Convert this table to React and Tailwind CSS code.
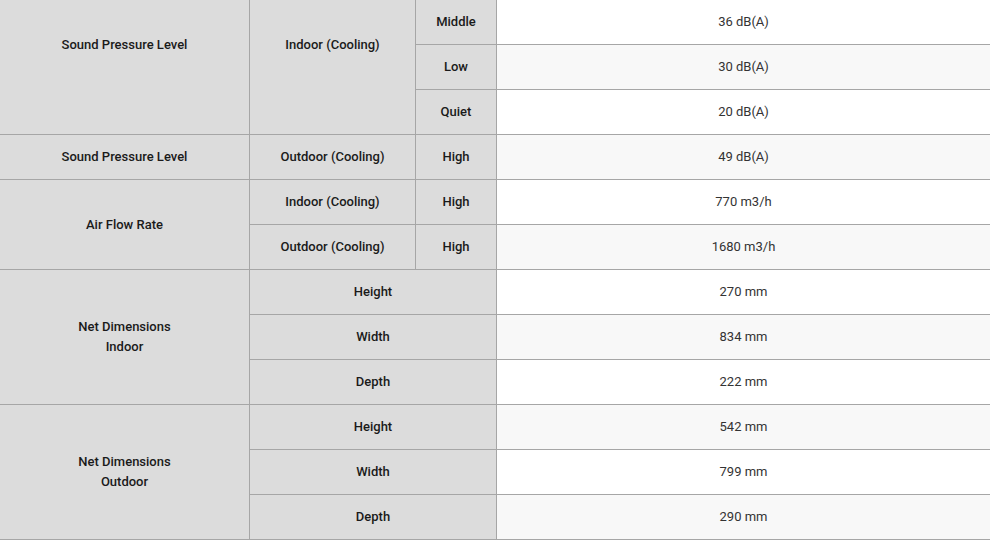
import React from "react";

const H = "bg-[#dcdcdc] text-[#1a1a1a] font-medium flex items-center justify-center text-center";

function V({ children, odd }) {
  return (
    <div className={`${odd ? "bg-[#f8f8f8]" : "bg-white"} text-[#333] flex items-center justify-center`}>
      {children}
    </div>
  );
}

export default function App() {
  return (
    <div
      className="w-[990px] h-[540px] overflow-hidden bg-white text-[13px]"
      style={{ fontFamily: "Roboto, 'Liberation Sans', sans-serif" }}
    >
      <div className="grid grid-cols-[249px_165px_80px_493px] grid-rows-[repeat(12,44px)] gap-px bg-[#a6a6a6] border-b border-[#a6a6a6] w-[990px]">
        <div className={`${H} row-span-3 pb-[45px]`}>Sound Pressure Level</div>
        <div className={`${H} row-span-3 pb-[45px]`}>Indoor (Cooling)</div>
        <div className={H}>Middle</div>
        <V>36 dB(A)</V>
        <div className={H}>Low</div>
        <V odd>30 dB(A)</V>
        <div className={H}>Quiet</div>
        <V>20 dB(A)</V>

        <div className={H}>Sound Pressure Level</div>
        <div className={H}>Outdoor (Cooling)</div>
        <div className={H}>High</div>
        <V odd>49 dB(A)</V>

        <div className={`${H} row-span-2`}>Air Flow Rate</div>
        <div className={H}>Indoor (Cooling)</div>
        <div className={H}>High</div>
        <V>770 m3/h</V>
        <div className={H}>Outdoor (Cooling)</div>
        <div className={H}>High</div>
        <V odd>1680 m3/h</V>

        <div className={`${H} row-span-3 leading-5`}>Net Dimensions<br />Indoor</div>
        <div className={`${H} col-span-2`}>Height</div>
        <V>270 mm</V>
        <div className={`${H} col-span-2`}>Width</div>
        <V odd>834 mm</V>
        <div className={`${H} col-span-2`}>Depth</div>
        <V>222 mm</V>

        <div className={`${H} row-span-3 leading-5`}>Net Dimensions<br />Outdoor</div>
        <div className={`${H} col-span-2`}>Height</div>
        <V odd>542 mm</V>
        <div className={`${H} col-span-2`}>Width</div>
        <V>799 mm</V>
        <div className={`${H} col-span-2`}>Depth</div>
        <V odd>290 mm</V>
      </div>
    </div>
  );
}
